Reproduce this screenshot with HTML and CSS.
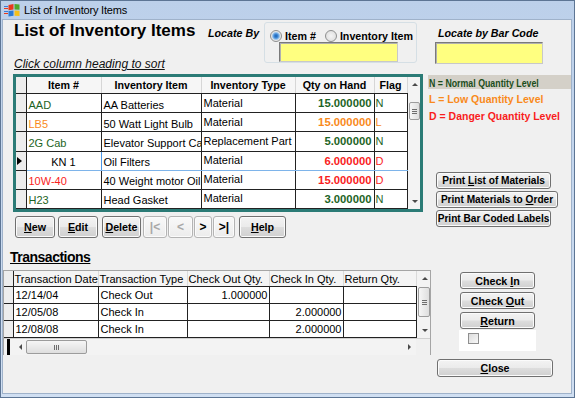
FILE: index.html
```html
<!DOCTYPE html>
<html lang="en">
<head>
    <meta charset="UTF-8">
    <title>List of Inventory Items</title>
    <link rel="stylesheet" href="styles.css">
</head>
<body>
<div class="window">
    <div class="titlebar">
        <svg class="app-icon" width="16" height="14" viewBox="0 0 16 14">
            <rect x="0" y="3" width="4" height="1" fill="#3d7bd6"/>
            <rect x="0" y="5" width="4" height="1" fill="#e8391c"/>
            <rect x="0" y="8" width="4" height="1" fill="#3d7bd6"/>
            <rect x="0" y="10" width="4" height="1" fill="#e8391c"/>
            <path d="M4.5 2 L9.5 1 L9.5 6.5 L4.5 7.2Z" fill="#e8391c"/>
            <path d="M10.5 1 L15.5 1.5 L15.5 6.8 L10.5 6.5Z" fill="#4fa82a"/>
            <path d="M4.5 8 L9.5 7.4 L9.5 12.8 L4.5 13.4Z" fill="#2a7bd6"/>
            <path d="M10.5 7.4 L15.5 7.7 L15.5 13 L10.5 12.8Z" fill="#f5c01a"/>
        </svg>
        <span>List of Inventory Items</span>
    </div>
    <div class="client">
        <div class="upper">
            <div class="main">
                <div class="head">
                    <div class="title-col">
                        <h1>List of Inventory Items</h1>
                        <div class="hint">Click column heading to sort</div>
                    </div>
                    <div class="locate-label">Locate By</div>
                    <div class="locate-group">
                        <div class="radios">
                            <label class="opt first"><span class="radio checked"></span>Item #</label>
                            <label class="opt"><span class="radio"></span>Inventory Item</label>
                        </div>
                        <div class="yellow-box locate-input"></div>
                    </div>
                </div>

                <div class="items-frame">
                    <table class="items">
                        <colgroup>
                            <col class="w-sel"><col class="w-id"><col class="w-name"><col class="w-type"><col class="w-qty"><col class="w-flag">
                        </colgroup>
                        <tr class="hdr">
                            <th class="sel"></th><th>Item #</th><th>Inventory Item</th><th>Inventory Type</th><th>Qty on Hand</th><th>Flag</th>
                        </tr>
                        <tr>
                            <td class="sel"></td><td class="id green">AAD</td><td class="name">AA Batteries</td><td class="type">Material</td><td class="qty green">15.000000</td><td class="flag green">N</td>
                        </tr>
                        <tr>
                            <td class="sel"></td><td class="id orange">LB5</td><td class="name">50 Watt Light Bulb</td><td class="type">Material</td><td class="qty orange">15.000000</td><td class="flag orange">L</td>
                        </tr>
                        <tr>
                            <td class="sel"></td><td class="id green">2G Cab</td><td class="name">Elevator Support Ca</td><td class="type">Replacement Part</td><td class="qty green">5.000000</td><td class="flag green">N</td>
                        </tr>
                        <tr class="current">
                            <td class="sel"><span class="row-mark"></span></td><td class="id editing">KN 1</td><td class="name">Oil Filters</td><td class="type">Material</td><td class="qty red">6.000000</td><td class="flag red">D</td>
                        </tr>
                        <tr>
                            <td class="sel"></td><td class="id red">10W-40</td><td class="name">40 Weight motor Oil</td><td class="type">Material</td><td class="qty red">15.000000</td><td class="flag red">D</td>
                        </tr>
                        <tr>
                            <td class="sel"></td><td class="id green">H23</td><td class="name">Head Gasket</td><td class="type">Material</td><td class="qty green">3.000000</td><td class="flag green">N</td>
                        </tr>
                    </table>
                    <div class="vscroll items-scroll">
                        <div class="arrow-box"><span class="arr-up"></span></div>
                        <div class="thumb"><span class="grip-h"></span></div>
                        <div class="track"></div>
                        <div class="arrow-box"><span class="arr-down"></span></div>
                    </div>
                </div>

                <div class="nav">
                    <button class="btn b-new"><u>N</u>ew</button>
                    <button class="btn b-edit"><u>E</u>dit</button>
                    <button class="btn b-delete"><u>D</u>elete</button>
                    <button class="vcr first-rec off">|&lt;</button>
                    <button class="vcr prev-rec off">&lt;</button>
                    <button class="vcr next-rec">&gt;</button>
                    <button class="vcr last-rec">&gt;|</button>
                    <button class="btn b-help"><u>H</u>elp</button>
                </div>
            </div>

            <div class="side">
                <div class="barcode-label">Locate by Bar Code</div>
                <div class="yellow-box barcode-input"></div>
                <div class="legend">
                    <div class="legend-n"><span class="narrow">N = Normal Quantity Level</span></div>
                    <div class="legend-l">L = Low Quantity Level</div>
                    <div class="legend-d">D = Danger Quantity Level</div>
                </div>
                <div class="print-buttons">
                    <button class="btn print p-list">Print <u>L</u>ist of Materials</button>
                    <button class="btn print p-order">Print Materials to <u>O</u>rder</button>
                    <button class="btn print p-labels">Print Bar Coded Labels</button>
                </div>
            </div>
        </div>

        <div class="lower">
            <div class="trans">
                <div class="trans-title">Transactions</div>
                <div class="trans-grid">
                    <div class="trans-body">
                        <table class="tx">
                            <colgroup>
                                <col class="t-sel"><col class="t-date"><col class="t-type"><col class="t-out"><col class="t-in"><col class="t-ret">
                            </colgroup>
                            <tr class="hdr">
                                <th class="sel"></th><th>Transaction Date</th><th>Transaction Type</th><th>Check Out Qty.</th><th>Check In Qty.</th><th>Return Qty.</th>
                            </tr>
                            <tr>
                                <td class="sel"></td><td>12/14/04</td><td>Check Out</td><td class="num">1.000000</td><td class="num"></td><td></td>
                            </tr>
                            <tr>
                                <td class="sel"></td><td>12/05/08</td><td>Check In</td><td class="num"></td><td class="num">2.000000</td><td></td>
                            </tr>
                            <tr>
                                <td class="sel"></td><td>12/08/08</td><td>Check In</td><td class="num"></td><td class="num">2.000000</td><td></td>
                            </tr>
                            <tr>
                                <td class="sel"></td><td></td><td></td><td></td><td></td><td></td>
                            </tr>
                        </table>
                        <div class="vscroll tx-scroll">
                            <div class="arrow-box"><span class="arr-up"></span></div>
                            <div class="thumb"><span class="grip-h"></span></div>
                            <div class="track"></div>
                            <div class="arrow-box"><span class="arr-down"></span></div>
                        </div>
                    </div>
                    <div class="hscroll-row">
                        <div class="hs-sel"><span class="black-bar"></span></div>
                        <div class="hscroll">
                            <div class="arrow-box wide"><span class="arr-left"></span></div>
                            <div class="hthumb"><span class="grip-v"></span></div>
                            <div class="track"></div>
                            <div class="arrow-box wide"><span class="arr-right"></span></div>
                        </div>
                        <div class="corner"></div>
                    </div>
                </div>
            </div>

            <div class="trans-side">
                <button class="btn check b-in">Check <u>I</u>n</button>
                <button class="btn check b-out">Check <u>O</u>ut</button>
                <button class="btn check b-return"><u>R</u>eturn</button>
                <div class="check-box-area"><span class="checkbox"></span></div>
                <button class="btn b-close"><u>C</u>lose</button>
            </div>
        </div>
    </div>
</div>
</body>
</html>
```

FILE: styles.css
```css
body {
    margin: 0;
    font-family: "Liberation Sans", Arial, sans-serif;
    font-size: 11px;
    color: #000;
    background: #fff;
}
.window {
    width: 575px;
    height: 398px;
    box-sizing: border-box;
    border: 1px solid #5d7594;
    background: linear-gradient(#bcd0ea, #d0dff2);
    padding: 0 2px 3px 1px;
    display: flex;
    flex-direction: column;
}
.titlebar {
    height: 18px;
    display: flex;
    align-items: center;
    padding-left: 2px;
    font-size: 11px;
    letter-spacing: -0.2px;
}
.app-icon {
    margin-right: 4px;
}
.client {
    flex: 1;
    background: #f0f0f0;
    border: 1px solid #9fb2ca;
    display: flex;
    flex-direction: column;
}

/* upper part */
.upper {
    display: flex;
    height: 218px;
}
.main {
    width: 425px;
}
.head {
    display: flex;
    height: 54px;
}
.title-col {
    margin-left: 11px;
    width: 194px;
}
h1 {
    margin: 1px 0 0;
    font-size: 17px;
    line-height: 20px;
    font-weight: bold;
}
.hint {
    margin-top: 16px;
    font-style: italic;
    font-size: 12px;
    line-height: 14px;
    text-decoration: underline;
    color: #111;
}
.locate-label {
    width: 56px;
    margin-top: 7px;
    font-weight: bold;
    font-style: italic;
    font-size: 10.7px;
    line-height: 13px;
}
.locate-group {
    margin-top: 2px;
    width: 153px;
    height: 41px;
    box-sizing: border-box;
    border: 1px solid #d5dfe5;
    border-radius: 3px;
    padding: 6px 0 0 5px;
}
.radios {
    display: flex;
    height: 13px;
    align-items: center;
}
.opt {
    display: flex;
    align-items: center;
    font-weight: bold;
    font-size: 10.7px;
}
.opt.first {
    margin-right: 9px;
}
.radio {
    width: 12px;
    height: 12px;
    box-sizing: border-box;
    border-radius: 50%;
    border: 1px solid #8e8f8f;
    background: radial-gradient(circle, #f4f4f4 0, #dadada 100%);
    margin-right: 3px;
}
.radio.checked {
    background: radial-gradient(circle, #1b5fb0 0, #3f8ad8 2px, #9cc4ea 3.5px, #e8e8e8 4.5px);
}
.yellow-box {
    box-sizing: border-box;
    background: #ffff80;
    border: 1px solid #c8c8c8;
    border-top-color: #7a7a7a;
    border-left-color: #7a7a7a;
    box-shadow: inset 1px 1px 0 #b0b0b0;
}
.locate-input {
    margin-left: 9px;
    width: 119px;
    height: 20px;
}

/* inventory grid */
.items-frame {
    margin-left: 10px;
    width: 410px;
    height: 138px;
    box-sizing: border-box;
    border: 3px solid #2b7b76;
    display: flex;
    background: #fff;
    overflow: hidden;
}
.items, .tx {
    border-collapse: collapse;
    table-layout: fixed;
}
.items {
    width: 391px;
}
.w-sel { width: 10px; }
.w-id { width: 75px; }
.w-name { width: 100px; }
.w-type { width: 94px; }
.w-qty { width: 79px; }
.w-flag { width: 33px; }
.items th {
    height: 16px;
    padding: 0;
    font-size: 10.7px;
    font-weight: bold;
    background: #f6f6f6;
    border-right: 1px solid #d6d6d6;
    border-bottom: 1px solid #222;
    white-space: nowrap;
    overflow: hidden;
}
.items td {
    height: 18px;
    padding: 0 2px;
    font-size: 11px;
    border-right: 1px solid #222;
    border-bottom: 1px solid #222;
    white-space: nowrap;
    overflow: hidden;
}
.items th.sel, .items td.sel, .tx th.sel, .tx td.sel {
    background: #ededed;
    border-right: 1px solid #222;
    padding: 0;
}
.items td.id, .items td.name {
    padding-top: 3px;
    height: 15px;
}
.items td.type {
    padding-bottom: 1px;
    height: 17px;
}
.items td.qty {
    text-align: right;
    font-weight: bold;
    font-size: 11.3px;
}
.items td.flag {
    padding-left: 1px;
}
.items tr.current td {
    border-top: 1px solid #7eb4ea;
    border-bottom: 1px solid #7eb4ea;
}
.items tr.current td.sel {
    border-top: 1px solid #222;
    border-bottom: 1px solid #222;
}
.items td.editing {
    text-align: center;
    border: 1px solid #4c96e4;
}
.row-mark {
    display: block;
    width: 0;
    height: 0;
    margin-left: 1px;
    border-top: 4px solid transparent;
    border-bottom: 4px solid transparent;
    border-left: 5px solid #000;
}
.green { color: #1d6425; }
.orange { color: #f98a1b; }
.red { color: #f91d1d; }

/* scrollbars */
.vscroll {
    display: flex;
    flex-direction: column;
    align-items: flex-end;
    background: #f3f3f3;
}
.items-scroll {
    width: 13px;
}
.arrow-box {
    height: 15px;
    width: 11px;
    display: flex;
    align-items: center;
    justify-content: center;
}
.arrow-box.wide {
    width: 14px;
    height: 15px;
}
.track {
    flex: 1;
}
.thumb {
    margin-top: 10px;
    width: 11px;
    height: 18px;
    box-sizing: border-box;
    border: 1px solid #9c9c9c;
    border-radius: 2px;
    background: linear-gradient(to right, #f6f6f6, #dedede);
    display: flex;
    align-items: center;
    justify-content: center;
}
.grip-h {
    width: 5px;
    height: 5px;
    background: repeating-linear-gradient(#6d6d6d 0 1px, transparent 1px 2px);
}
.grip-v {
    width: 5px;
    height: 5px;
    background: repeating-linear-gradient(to right, #6d6d6d 0 1px, transparent 1px 2px);
}
.arr-up, .arr-down, .arr-left, .arr-right {
    width: 0;
    height: 0;
}
.arr-up {
    border-left: 3px solid transparent;
    border-right: 3px solid transparent;
    border-bottom: 3px solid #4a4a4a;
}
.arr-down {
    border-left: 3px solid transparent;
    border-right: 3px solid transparent;
    border-top: 3px solid #4a4a4a;
}
.arr-left {
    border-top: 3px solid transparent;
    border-bottom: 3px solid transparent;
    border-right: 3px solid #4a4a4a;
}
.arr-right {
    border-top: 3px solid transparent;
    border-bottom: 3px solid transparent;
    border-left: 3px solid #4a4a4a;
}

/* buttons */
.btn, .vcr {
    font-family: "Liberation Sans", Arial, sans-serif;
    font-weight: bold;
    font-size: 10.7px;
    color: #000;
    padding: 0;
    box-sizing: border-box;
    border: 1px solid #707070;
    border-radius: 3px;
    background: linear-gradient(#f3f3f3 0%, #ebebeb 48%, #dddddd 52%, #d0d0d0 100%);
    box-shadow: inset 0 0 0 1px #fbfbfb;
}
.nav {
    display: flex;
    margin: 4px 0 0 12px;
    height: 22px;
}
.nav .btn, .nav .vcr {
    height: 22px;
}
.b-new { width: 40px; margin-right: 3px; }
.b-edit { width: 40px; margin-right: 4px; }
.b-delete { width: 39px; margin-right: 2px; }
.vcr {
    border-color: #b4b4b4;
    background: linear-gradient(#f9f9f9, #ececec);
    font-size: 12px;
    margin-right: 1px;
}
.vcr.off {
    color: #a8a8a8;
}
.first-rec { width: 24px; }
.prev-rec { width: 25px; }
.next-rec { width: 18px; }
.last-rec { width: 22px; margin-right: 4px; }
.b-help { width: 47px; }

/* right side */
.side {
    width: 143px;
}
.barcode-label {
    margin: 7px 0 0 10px;
    font-weight: bold;
    font-style: italic;
    font-size: 10.7px;
    line-height: 13px;
}
.barcode-input {
    margin: 2px 0 0 7px;
    width: 108px;
    height: 22px;
}
.legend {
    margin-top: 11px;
    font-weight: bold;
}
.legend-n {
    height: 14px;
    box-sizing: border-box;
    padding: 1px 0 0 1px;
    line-height: 14px;
    background: #d4d0c8;
    color: #1b4d1b;
    font-size: 11px;
    white-space: nowrap;
    overflow: hidden;
}
.narrow {
    display: inline-block;
    transform: scaleX(0.8);
    transform-origin: left center;
}
.legend-l, .legend-d {
    padding-left: 1px;
    line-height: 17px;
    font-size: 10.5px;
    white-space: nowrap;
}
.legend-l {
    margin-top: 2px;
    color: #f98a1b;
}
.legend-d {
    color: #f91d1d;
}
.print-buttons {
    margin: 47px 0 0 8px;
    display: flex;
    flex-direction: column;
    align-items: flex-start;
}
.print {
    height: 17px;
    margin-bottom: 2px;
    font-size: 10.1px;
    white-space: nowrap;
}
.p-list { width: 115px; }
.p-order { width: 122px; }
.p-labels { width: 115px; }

/* transactions */
.lower {
    display: flex;
    flex: 1;
}
.trans {
    width: 428px;
}
.trans-title {
    margin: 11px 0 0 7px;
    font-weight: bold;
    font-size: 14px;
    line-height: 16px;
    letter-spacing: -0.5px;
    text-decoration: underline;
}
.trans-grid {
    margin-top: 5px;
    width: 428px;
    height: 85px;
    box-sizing: border-box;
    border: 1px solid #a5a5a5;
    background: #fff;
}
.trans-body {
    display: flex;
    height: 67px;
    overflow: hidden;
}
.tx {
    width: 412px;
}
.t-sel { width: 9px; }
.t-date { width: 85px; }
.t-type { width: 89px; }
.t-out { width: 82px; }
.t-in { width: 74px; }
.t-ret { width: 73px; }
.tx th {
    height: 15px;
    padding: 0 0 0 1px;
    text-align: left;
    font-weight: normal;
    font-size: 11px;
    background: #f4f4f4;
    border-right: 1px solid #dadada;
    border-bottom: 1px solid #222;
    white-space: nowrap;
    overflow: hidden;
}
.tx td {
    height: 16px;
    padding: 0 2px;
    font-size: 11px;
    border-right: 1px solid #222;
    border-bottom: 1px solid #222;
    white-space: nowrap;
}
.tx td.num {
    text-align: right;
    padding-right: 1px;
}
.tx-scroll {
    width: 14px;
    background: #f3f3f3;
}
.tx-scroll .thumb {
    margin-top: 1px;
    height: 30px;
    width: 12px;
}
.hscroll-row {
    display: flex;
    height: 16px;
    border-top: 1px solid #d0d0d0;
}
.hs-sel {
    width: 9px;
    display: flex;
    justify-content: center;
    background: #f3f3f3;
}
.black-bar {
    width: 3px;
    background: #000;
}
.hscroll {
    flex: 1;
    display: flex;
    align-items: center;
    background: #f3f3f3;
}
.hthumb {
    margin-left: -1px;
    width: 61px;
    height: 14px;
    box-sizing: border-box;
    border: 1px solid #9c9c9c;
    border-radius: 2px;
    background: linear-gradient(#f6f6f6, #dedede);
    display: flex;
    align-items: center;
    justify-content: center;
}
.corner {
    width: 14px;
    background: #f0f0f0;
}

.trans-side {
    width: 140px;
    display: flex;
    flex-direction: column;
    align-items: flex-start;
}
.check {
    width: 75px;
    height: 17px;
    margin: 0 0 3px 29px;
}
.b-in {
    margin-top: 34px;
}
.b-return {
    margin-bottom: 0;
}
.check-box-area {
    margin: 1px 0 0 28px;
    width: 77px;
    height: 21px;
    box-sizing: border-box;
    background: #fff;
    padding: 3px 0 0 9px;
}
.checkbox {
    display: block;
    width: 11px;
    height: 11px;
    box-sizing: border-box;
    border: 1px solid #8f8f8f;
    background: linear-gradient(135deg, #dcdcdc, #f8f8f8);
}
.b-close {
    margin: 8px 0 0 6px;
    width: 116px;
    height: 18px;
}
```
